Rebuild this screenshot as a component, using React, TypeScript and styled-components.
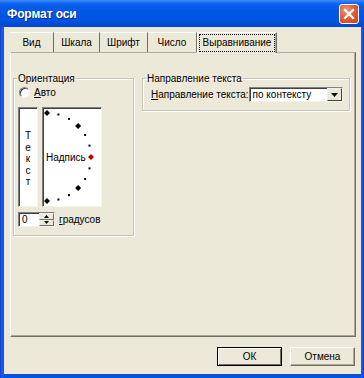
import React from 'react';
import styled, { createGlobalStyle } from 'styled-components';

const FONT = `"Liberation Sans", Arial, sans-serif`;

const Global = createGlobalStyle`
  html, body { margin: 0; padding: 0; background: #ECE9D8; }
  #root { width: 364px; height: 378px; }
  * { box-sizing: border-box; }
`;

const Window = styled.div`
  width: 364px;
  height: 378px;
  display: flex;
  flex-direction: column;
  background: linear-gradient(to right, #0A3FC4 0px, #1E5EF0 2px, #0A50E0 4px, #0A50E0 360px, #1B5BEA 362px, #0A3FC4 364px);
  font-family: ${FONT};
  font-size: 10px;
  color: #000;
  white-space: nowrap;
`;

const TitleBar = styled.div`
  height: 27px;
  flex: none;
  display: flex;
  align-items: center;
  justify-content: space-between;
  padding: 0 5px 0 7px;
  background: linear-gradient(to bottom, #3B8CFA 0%, #0E62F0 14%, #0057E6 40%, #0054E2 75%, #0446CC 100%);
`;

const Title = styled.span`
  color: #fff;
  font-weight: bold;
  font-size: 12px;
  text-shadow: 1px 1px 0 #0A2A8C;
  letter-spacing: -0.1px;
`;

const CloseButton = styled.div`
  width: 20px;
  height: 20px;
  border-radius: 3px;
  border: 1px solid #fff;
  background: radial-gradient(circle at 35% 30%, #F09A7A 0%, #E0603C 45%, #C8401E 100%);
  display: flex;
  align-items: center;
  justify-content: center;
`;

const Body = styled.div`
  flex: 1;
  margin: 0 3px 4px 4px;
  background: #ECE9D8;
  display: flex;
  flex-direction: column;
  padding: 5px 5px 8px 6px;
`;

const TabRow = styled.div`
  display: flex;
  height: 20px;
  flex: none;
  position: relative;
  z-index: 1;
`;

const Tab = styled.div<{ $w: number; $active?: boolean }>`
  width: ${p => p.$w}px;
  height: ${p => (p.$active ? 21 : 20)}px;
  display: flex;
  align-items: center;
  justify-content: center;
  background: #ECE9D8;
  border-top: 1px solid #fff;
  border-left: ${p => (p.$active ? '1px solid #fff' : 'none')};
  border-right: 1px solid #716F64;
  box-shadow: ${p => (p.$active ? 'inset -1px 0 0 #ACA899' : 'none')};
  padding-bottom: ${p => (p.$active ? 1 : 0)}px;
`;

const FocusLabel = styled.span`
  outline: 1px dotted #000;
  outline-offset: 1px;
  padding: 1px 2px;
  line-height: 12px;
`;

const Panel = styled.div`
  height: 285px;
  flex: none;
  border: 1px solid;
  border-color: #B0AD9E #716F64 #716F64 #FFFFFF;
  box-shadow: inset -1px -1px 0 #ACA899;
  display: flex;
  align-items: flex-start;
  gap: 8px;
  padding: 19px 0 0 2px;
`;

const Group = styled.fieldset<{ $w: number; $h: number }>`
  margin: 0;
  padding: 0;
  min-width: 0;
  width: ${p => p.$w}px;
  height: ${p => p.$h}px;
  border: 1px solid #C7C4B4;
  box-shadow: 1px 1px 0 #fff, inset 1px 1px 0 #fff;
  display: flex;
  flex-direction: column;
`;

const Legend = styled.legend`
  padding: 0 1px;
  margin-left: 3px;
  line-height: 13px;
`;

const RadioRow = styled.div`
  display: flex;
  align-items: center;
  height: 14px;
  gap: 4px;
  padding-left: 5px;
`;

const RadioCircle = styled.span`
  width: 11px;
  height: 11px;
  border-radius: 50%;
  background: #fff;
  border: 1px solid;
  border-color: #808080 #F4F3EE #F4F3EE #808080;
  box-shadow: inset 1px 1px 0 #404040;
`;

const U = styled.span`
  text-decoration: underline;
`;

const BoxesRow = styled.div`
  display: flex;
  gap: 4px;
  margin-top: 8px;
  padding-left: 4px;
  height: 100px;
`;

const SunkenBox = styled.div<{ $w: number }>`
  width: ${p => p.$w}px;
  height: 100px;
  background: #fff;
  border: 1px solid;
  border-color: #808080 #F4F3EE #F4F3EE #808080;
  box-shadow: inset 1px 1px 0 #404040;
  position: relative;
`;

const VerticalText = styled.div`
  height: 100%;
  display: flex;
  flex-direction: column;
  align-items: center;
  justify-content: center;
  line-height: 11.5px;
  padding-top: 4px;
`;

const ArcSvg = styled.svg`
  position: absolute;
  left: 0;
  top: 0;
`;

const CaptionLabel = styled.span`
  position: absolute;
  left: 3px;
  top: 43px;
  line-height: 13px;
`;

const SpinRow = styled.div`
  display: flex;
  align-items: center;
  margin-top: 5px;
  padding-left: 4px;
  height: 15px;
  gap: 4px;
`;

const SpinBox = styled.div`
  display: flex;
  height: 15px;
  width: 37px;
  background: #fff;
  border: 1px solid;
  border-color: #808080 #F4F3EE #F4F3EE #808080;
  box-shadow: inset 1px 1px 0 #404040;
`;

const SpinValue = styled.span`
  flex: 1;
  padding-left: 3px;
  line-height: 13px;
`;

const SpinButtons = styled.div`
  width: 15px;
  display: flex;
  flex-direction: column;
`;

const SpinBtn = styled.div`
  flex: 1;
  background: #ECE9D8;
  border: 1px solid;
  border-color: #F4F3EE #716F64 #716F64 #F4F3EE;
  display: flex;
  align-items: center;
  justify-content: center;
`;

const DirRow = styled.div`
  display: flex;
  align-items: center;
  justify-content: space-between;
  margin-top: 2px;
  padding: 0 6px 0 8px;
  height: 15px;
`;

const Select = styled.div`
  width: 95px;
  height: 15px;
  display: flex;
  background: #fff;
  border: 1px solid;
  border-color: #808080 #F4F3EE #F4F3EE #808080;
  box-shadow: inset 1px 1px 0 #404040;
`;

const SelectValue = styled.span`
  flex: 1;
  padding-left: 3px;
  line-height: 13px;
`;

const DropBtn = styled.div`
  width: 15px;
  background: #ECE9D8;
  border: 1px solid;
  border-color: #F4F3EE #404040 #404040 #F4F3EE;
  display: flex;
  align-items: center;
  justify-content: center;
`;

const ButtonRow = styled.div`
  display: flex;
  justify-content: flex-end;
  gap: 8px;
  margin-top: 10px;
  padding-right: 1px;
`;

const Button = styled.div<{ $default?: boolean }>`
  width: 65px;
  height: 19px;
  display: flex;
  align-items: center;
  justify-content: center;
  background: #ECE9D8;
  border: 1px solid;
  border-color: ${p => (p.$default ? '#000' : '#FFFFFF #716F64 #716F64 #FFFFFF')};
  box-shadow: ${p => (p.$default ? 'inset 1px 1px 0 #fff, inset -1px -1px 0 #716F64' : 'inset -1px -1px 0 #ACA899')};
`;

const tabs = [
  { label: 'Вид', w: 44 },
  { label: 'Шкала', w: 46 },
  { label: 'Шрифт', w: 48 },
  { label: 'Число', w: 49 },
];

const CX = 4;
const CY = 49;
const R = 44;

const pt = (deg: number) => {
  const a = (deg * Math.PI) / 180;
  return { x: CX + R * Math.cos(a), y: CY - R * Math.sin(a) };
};

const Diamond: React.FC<{ deg: number; color?: string; s?: number }> = ({ deg, color = '#000', s = 3 }) => {
  const { x, y } = pt(deg);
  return <polygon points={`${x},${y - s} ${x + s},${y} ${x},${y + s} ${x - s},${y}`} fill={color} />;
};

const Dot: React.FC<{ deg: number }> = ({ deg }) => {
  const { x, y } = pt(deg);
  return <rect x={x - 1} y={y - 1} width={2} height={2} fill="#000" />;
};

export default function App() {
  return (
    <>
      <Global />
      <Window>
        <TitleBar>
          <Title>Формат оси</Title>
          <CloseButton>
            <svg width="12" height="12" viewBox="0 0 12 12">
              <path d="M2 2 L10 10 M10 2 L2 10" stroke="#fff" strokeWidth="2.2" strokeLinecap="square" />
            </svg>
          </CloseButton>
        </TitleBar>
        <Body>
          <TabRow>
            {tabs.map(t => (
              <Tab key={t.label} $w={t.w}>{t.label}</Tab>
            ))}
            <Tab $w={80} $active>
              <FocusLabel>Выравнивание</FocusLabel>
            </Tab>
          </TabRow>
          <Panel>
            <Group $w={121} $h={164}>
              <Legend>Ориентация</Legend>
              <RadioRow>
                <RadioCircle />
                <span><U>А</U>вто</span>
              </RadioRow>
              <BoxesRow>
                <SunkenBox $w={20}>
                  <VerticalText>
                    <span>Т</span>
                    <span>е</span>
                    <span>к</span>
                    <span>с</span>
                    <span>т</span>
                  </VerticalText>
                </SunkenBox>
                <SunkenBox $w={60}>
                  <ArcSvg width="58" height="98" viewBox="0 0 58 98">
                    <Diamond deg={90} />
                    <Dot deg={75} />
                    <Dot deg={60} />
                    <Diamond deg={45} />
                    <Dot deg={30} />
                    <Dot deg={15} />
                    <Diamond deg={0} color="#C00000" />
                    <Dot deg={-15} />
                    <Dot deg={-30} />
                    <Diamond deg={-45} />
                    <Dot deg={-60} />
                    <Dot deg={-75} />
                    <Diamond deg={-90} />
                  </ArcSvg>
                  <CaptionLabel>Надпись</CaptionLabel>
                </SunkenBox>
              </BoxesRow>
              <SpinRow>
                <SpinBox>
                  <SpinValue>0</SpinValue>
                  <SpinButtons>
                    <SpinBtn>
                      <svg width="5" height="3" viewBox="0 0 5 3"><path d="M0 3 L2.5 0 L5 3 Z" fill="#000" /></svg>
                    </SpinBtn>
                    <SpinBtn>
                      <svg width="5" height="3" viewBox="0 0 5 3"><path d="M0 0 L2.5 3 L5 0 Z" fill="#000" /></svg>
                    </SpinBtn>
                  </SpinButtons>
                </SpinBox>
                <span><U>г</U>радусов</span>
              </SpinRow>
            </Group>
            <Group $w={208} $h={39}>
              <Legend>Направление текста</Legend>
              <DirRow>
                <span><U>Н</U>аправление текста:</span>
                <Select>
                  <SelectValue>по контексту</SelectValue>
                  <DropBtn>
                    <svg width="7" height="4" viewBox="0 0 7 4"><path d="M0 0 L3.5 4 L7 0 Z" fill="#000" /></svg>
                  </DropBtn>
                </Select>
              </DirRow>
            </Group>
          </Panel>
          <ButtonRow>
            <Button $default>ОК</Button>
            <Button>Отмена</Button>
          </ButtonRow>
        </Body>
      </Window>
    </>
  );
}
